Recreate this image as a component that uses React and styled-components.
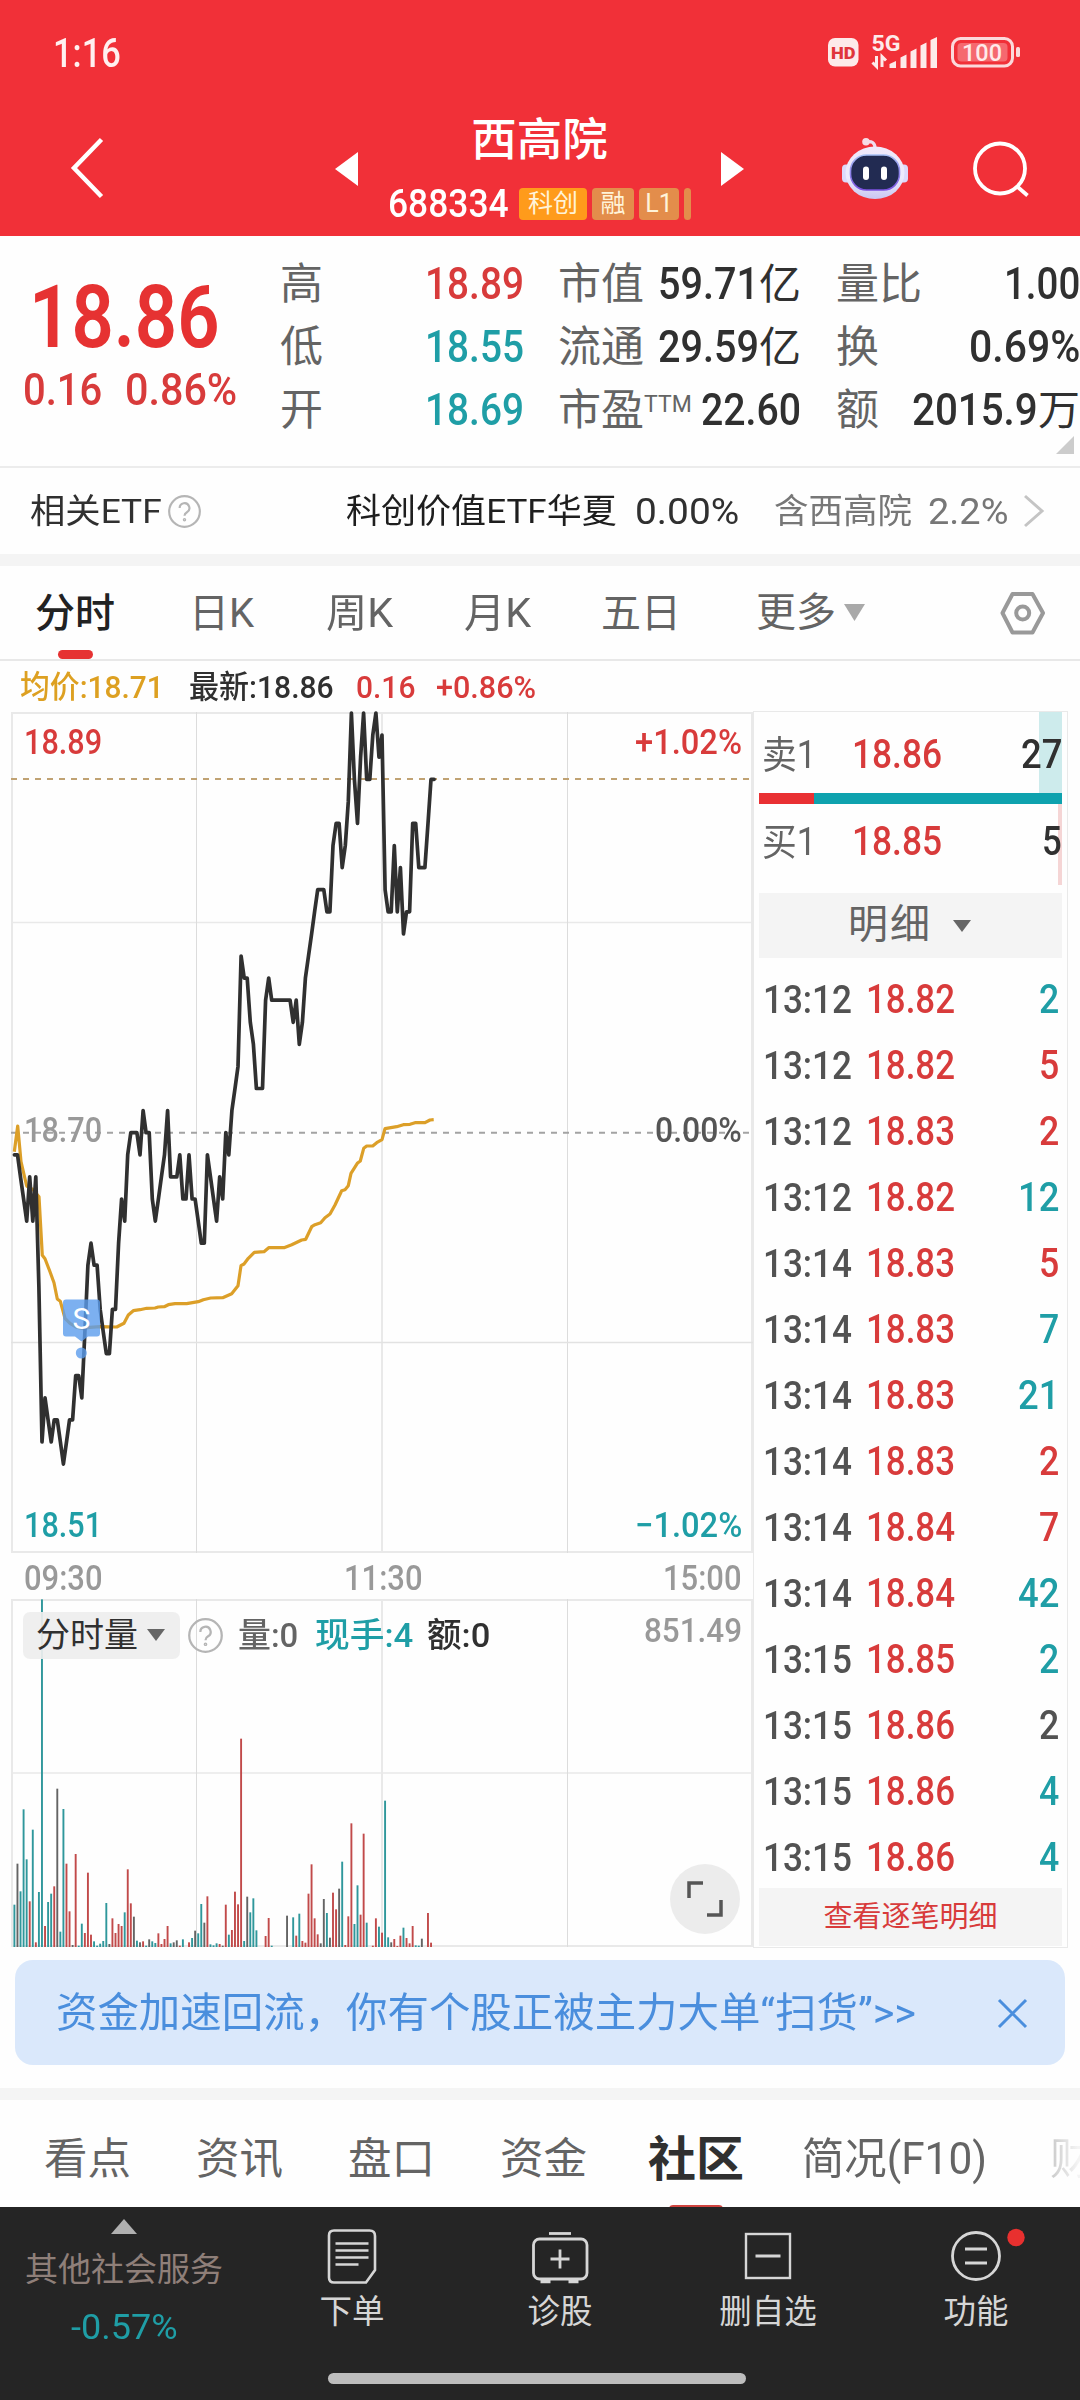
import React, { useLayoutEffect, useRef, useState } from "react";
import styled, { createGlobalStyle } from "styled-components";

const RED = "#d83b3b";
const TEAL = "#1f9ea6";
const INK = "#303030";
const MUTED = "#646464";

const Global = createGlobalStyle`
  * { box-sizing: border-box; }
  body { margin: 0; background: #fefefe; }
  svg { display: block; flex: none; overflow: visible; }
`;

const Page = styled.div`
  width: 1080px;
  height: 2400px;
  overflow: hidden;
  display: flex;
  flex-direction: column;
  font-family: Roboto, "Noto Sans CJK SC", sans-serif;
  color: ${INK};
  background: #fefefe;
`;

/* ---------- text squeezed to a fixed advance ---------- */
const Slot = styled.span`
  display: inline-block;
  flex: none;
  width: ${(p) => p.$w}px;
  white-space: nowrap;
  color: ${(p) => p.$color || "inherit"};
  font-size: ${(p) => (p.$size ? p.$size + "px" : "inherit")};
  font-weight: ${(p) => p.$weight || "inherit"};
  margin-left: ${(p) => p.$ml || 0}px;
`;
const Inner = styled.span`
  display: inline-block;
  transform-origin: 0 50%;
`;
function Fit({ w, children, ...rest }) {
  const ref = useRef(null);
  const [k, setK] = useState(1);
  useLayoutEffect(() => {
    setK(w / ref.current.offsetWidth);
  }, [w, children]);
  const props = {};
  Object.keys(rest).forEach((n) => (props["$" + n] = rest[n]));
  return (
    <Slot $w={w} {...props}>
      <Inner ref={ref} style={{ transform: `scaleX(${k})` }}>{children}</Inner>
    </Slot>
  );
}

/* ---------- status bar ---------- */
const StatusBar = styled.div`
  height: 104px;
  flex: none;
  background: #f13038;
  color: #fff0f0;
  display: flex;
  justify-content: space-between;
  padding: 33px 60px 0 53px;
  line-height: 41px;
`;
const Indicators = styled.div`
  display: flex;
`;

function StatusIcons() {
  return (
    <Indicators>
      <svg width="194" height="40" viewBox="826 33 194 40">
        <rect x="828" y="38" width="30.500" height="28.500" rx="7" fill="#fdeaea" />
        <text x="831" y="58.500" fontSize="17" fontWeight="900" textLength="24.500" lengthAdjust="spacingAndGlyphs" fill="#e0353b">HD</text>
        <text x="871.500" y="51" fontSize="22.500" fontWeight="700" textLength="29" lengthAdjust="spacingAndGlyphs" fill="#fdeaea">5G</text>
        <g fill="none" stroke="#fdeaea" strokeWidth="3">
          <path d="M876.500 56v10.500l-4-4M882 67v-10.500l4 4" />
        </g>
        <g fill="#fdeaea">
          <path d="M889.500 64l6.500-3v7h-6.500zM900.500 57.500l6-3V68h-6zM910.500 51.500l6-3V68h-6zM920.500 45.500l6-3V68h-6zM930.500 40l6.500-3V68h-6.500z" />
        </g>
        <rect x="952.500" y="38.500" width="60" height="27.500" rx="8" fill="none" stroke="#fbd9db" strokeWidth="3" />
        <rect x="957.500" y="43" width="50" height="18.500" rx="4" fill="#f5696f" />
        <text x="962" y="61" fontSize="24" fontWeight="500" textLength="40" lengthAdjust="spacingAndGlyphs" fill="#ffeaea">100</text>
        <rect x="1016" y="47" width="4" height="10" rx="1.500" fill="#fbd9db" />
      </svg>
    </Indicators>
  );
}

/* ---------- header ---------- */
const Header = styled.div`
  height: 132px;
  flex: none;
  background: #f13038;
  color: #fff;
  display: flex;
  align-items: flex-start;
`;
const HeadSide = styled.div`
  width: ${(p) => p.$w}px;
  height: 128px;
  display: flex;
  align-items: center;
  padding-left: ${(p) => p.$pl || 0}px;
`;
const HeadTitle = styled.div`
  width: 306px;
  display: flex;
  flex-direction: column;
  align-items: center;
  padding-right: 1px;
`;
const StockName = styled.div`
  font-size: 45.500px;
  line-height: 56px;
  padding-top: 9px;
  height: 70px;
  font-weight: 500;
`;
const CodeRow = styled.div`
  display: flex;
  align-items: center;
  height: 60px;
  gap: 10px;
`;
const Tag = styled.span`
  height: 32px;
  width: ${(p) => p.$w}px;
  line-height: 31px;
  text-align: center;
  border-radius: 4px;
  background: ${(p) => p.$bg};
  color: #fff3d8;
  font-size: 25px;
`;

/* ---------- quote ---------- */
const Quote = styled.div`
  height: 232px;
  flex: none;
  border-bottom: 2px solid #ececec;
  display: flex;
  position: relative;
`;
const PriceCol = styled.div`
  width: 280px;
  color: ${RED};
`;
const BigPrice = styled.div`
  padding: 36px 0 0 29px;
  height: 122px;
  line-height: 90px;
  font-size: 87px;
  font-weight: 600;
  color: #e63232;
`;
const ChangeRow = styled.div`
  padding: 7px 0 0 23px;
  line-height: 52px;
  font-size: 43.500px;
  font-weight: 500;
`;
const StatCol = styled.div`
  width: ${(p) => p.$w}px;
  margin-right: ${(p) => p.$mr || 0}px;
  padding-top: 17px;
`;
const Stat = styled.div`
  display: flex;
  justify-content: space-between;
  height: 63px;
  line-height: 63px;
  font-size: 43px;
  color: ${MUTED};
`;
const StatValue = styled.span`
  display: flex;
  font-size: 43.500px;
  font-weight: 500;
  color: ${(p) => p.$color || INK};
`;
const Unit = styled.span`
  font-size: 42px;
  font-weight: 400;
`;
const StatLabel = styled.span`
  display: flex;
`;
const Sup = styled.span`
  line-height: 51px;
  font-size: 23px;
`;
const Corner = styled.svg`
  position: absolute;
  right: 6px;
  top: 200px;
`;

/* ---------- ETF ---------- */
const EtfRow = styled.div`
  height: 86px;
  flex: none;
  line-height: 87px;
  padding: 0 36px 0 30px;
  display: flex;
  align-items: center;
  justify-content: space-between;
  font-size: 34px;
`;
const Group = styled.div`
  display: flex;
  align-items: center;
  gap: ${(p) => p.$gap || 0}px;
  color: ${(p) => p.$color || "inherit"};
`;
const Band = styled.div`
  height: 12px;
  flex: none;
  background: #f4f4f4;
`;

/* ---------- period tabs ---------- */
const Periods = styled.div`
  height: 95px;
  flex: none;
  border-bottom: 2px solid #e8e8e8;
  display: flex;
  align-items: stretch;
  padding-left: 35px;
`;
const Period = styled.div`
  width: ${(p) => p.$w}px;
  line-height: 95px;
  font-size: 40px;
  display: flex;
  flex-direction: column;
  color: ${(p) => (p.$on ? "#222" : MUTED)};
  font-weight: ${(p) => (p.$on ? 500 : 400)};
`;
const PeriodMark = styled.i`
  width: 35px;
  height: 9px;
  border-radius: 5px;
  background: #e63232;
  margin: -11px 0 0 23px;
`;
const More = styled.div`
  display: flex;
  align-items: center;
  gap: 8px;
  width: 243px;
  line-height: 95px;
  height: 92px;
  font-size: 40px;
  color: ${MUTED};
`;

/* ---------- main ---------- */
const Main = styled.div`
  height: 1287px;
  flex: none;
  display: flex;
`;
const Left = styled.div`
  width: 753px;
`;
const Legend = styled.div`
  height: 50px;
  line-height: 53px;
  padding-left: 20px;
  display: flex;
  font-size: 31.500px;
`;
const Plot = styled.div`
  position: relative;
  height: ${(p) => p.$h}px;
`;
const Overlay = styled.div`
  position: absolute;
  inset: 0;
  padding: ${(p) => p.$pad};
  display: flex;
  flex-direction: column;
  justify-content: space-between;
`;
const ScaleRow = styled.div`
  display: flex;
  justify-content: space-between;
  line-height: 40px;
  font-size: 34.500px;
  font-weight: 500;
  color: ${(p) => p.$color};
  padding-bottom: ${(p) => p.$lift || 0}px;
`;
const Axis = styled.div`
  height: 45px;
  display: flex;
  justify-content: space-between;
  padding: 4px 11px 0 24px;
  line-height: 40px;
  font-size: 34.500px;
  font-weight: 500;
  color: #999;
`;
const VolHead = styled.div`
  display: flex;
  align-items: center;
  font-size: 34px;
  line-height: 48px;
`;
const Picker = styled.div`
  width: 157px;
  height: 47px;
  border-radius: 7px;
  background: rgba(238, 238, 238, 0.92);
  display: flex;
  align-items: center;
  justify-content: center;
  gap: 9px;
  padding-right: 2px;
  margin-right: 8px;
`;
const MaxVolume = styled.div`
  height: 48px;
  line-height: 38px;
  margin-left: 154px;
`;
const ExpandRow = styled.div`
  display: flex;
  justify-content: flex-end;
`;
const Expand = styled.div`
  width: 70px;
  height: 70px;
  margin-right: 2px;
  border-radius: 35px;
  background: #ececec;
  display: flex;
  align-items: center;
  justify-content: center;
`;

/* ---------- order book ---------- */
const Book = styled.div`
  width: 315px;
  margin-top: 50px;
  height: 1237px;
  border: 1.500px solid #e9e9e9;
  padding: 0 5px 0 5px;
  display: flex;
  flex-direction: column;
`;
const BookRow = styled.div`
  height: 81px;
  display: flex;
  align-items: center;
  padding: ${(p) => p.$pad};
  font-size: 38px;
  line-height: 44px;
  color: ${MUTED};
  background: linear-gradient(${(p) => p.$depth}, ${(p) => p.$depth}) right / ${(p) => p.$dw}px 100% no-repeat;
`;
const Ratio = styled.div`
  height: 11px;
  background: linear-gradient(90deg, #e93033 55px, #0ea2ae 55px);
`;
const Price = styled.span`
  margin-left: ${(p) => p.$ml}px;
  font-size: 40px;
  font-weight: 500;
  color: ${RED};
  flex: 1;
`;
const Qty = styled.span`
  font-size: 40px;
  font-weight: 500;
  color: ${(p) => p.$color};
`;
const DetailHead = styled.div`
  margin-top: 8px;
  height: 65px;
  line-height: 64px;
  background: #f4f4f4;
  display: flex;
  align-items: center;
  justify-content: center;
  gap: 21px;
  font-size: 40px;
  letter-spacing: 2px;
  color: ${MUTED};
  padding-right: 2px;
`;
const DetailText = styled.span`
  height: 65px;
`;
const Trades = styled.div`
  padding: 9px 3px 0 4px;
  height: 930px;
`;
const Trade = styled.div`
  height: 66px;
  line-height: 66px;
  display: flex;
  font-size: 39px;
  font-weight: 500;
  color: #525252;
`;
const DetailLink = styled.div`
  height: 58px;
  line-height: 58px;
  background: #f4f4f4;
  text-align: center;
  color: ${RED};
  font-size: 29px;
`;

/* ---------- banner, tabs, nav ---------- */
const BannerArea = styled.div`
  height: 140px;
  flex: none;
  padding: 12px 15px 0;
`;
const Banner = styled.div`
  height: 105px;
  line-height: 107px;
  border-radius: 18px;
  background: #dae8fb;
  color: #4a8edd;
  font-size: 41px;
  display: flex;
  justify-content: space-between;
  padding: 0 37px 0 41px;
`;
const CloseIcon = styled.svg`
  margin-top: 38px;
`;
const Sections = styled.div`
  height: 107px;
  flex: none;
  display: flex;
  overflow: hidden;
  padding-left: 44px;
`;
const Section = styled.div`
  flex: none;
  width: ${(p) => p.$w}px;
  height: 107px;
  line-height: 119px;
  font-size: ${(p) => (p.$on ? 48 : 43.500)}px;
  font-weight: ${(p) => (p.$on ? 700 : 400)};
  color: ${(p) => (p.$on ? "#303030" : MUTED)};
`;
const FadedSection = styled(Section)`
  color: transparent;
  background: linear-gradient(90deg, #c9c9c9, #f4f4f4 28px);
  background-clip: text;
  overflow: hidden;
`;
const SectionMark = styled.i`
  display: block;
  width: 54px;
  height: 6px;
  border-radius: 4px 4px 0 0;
  background: #d0433f;
  margin: -14px 0 0 21px;
`;
const Nav = styled.div`
  height: 193px;
  flex: none;
  background: #252525;
  display: flex;
  flex-direction: column;
  justify-content: space-between;
  align-items: center;
  padding-bottom: 16px;
`;
const NavRow = styled.div`
  width: 1080px;
  display: flex;
`;
const IndexCell = styled.div`
  width: 248px;
  padding-top: 12px;
  display: flex;
  flex-direction: column;
  align-items: center;
  color: #8f7f79;
  font-size: 33px;
`;
const IndexName = styled.div`
  line-height: 46px;
  margin-top: 13px;
`;
const IndexChange = styled.div`
  line-height: 40px;
  margin-top: 15px;
  padding-left: 1px;
  font-size: 35px;
  color: ${TEAL};
`;
const NavCell = styled.div`
  width: 208px;
  padding-top: 20px;
  display: flex;
  flex-direction: column;
  align-items: center;
  color: #d6d6d6;
  font-size: 32.500px;
  line-height: 44px;
  gap: 5px;
`;
const HomeBar = styled.div`
  width: 418px;
  height: 11px;
  border-radius: 6px;
  background: #bdbdbd;
  margin-right: 6px;
`;

/* ---------- data ---------- */
const LEFT = 14.4;
const STEP = 3.0635;
const TICK = 22.09;
const MID = 1132.7;

const ticks = [
  -1, -1, -2, -3, -4, -2, -4, -2, -7, -14, -12, -13, -14, -13, -13, -14, -15, -14, -13, -13,
  -11, -11, -12, -9, -6, -5, -6, -6, -8, -9, -10, -10, -8, -8, -5, -3, -4, -1, 0, 0,
  0, -1, 1, 0, 0, -3, -4, -3, -2, -1, 1, -2, -2, -2, -1, -3, -3, -1, -3, -3,
  -4, -5, -5, -1, -2, -3, -4, -2, -3, 0, -1, 1, 2, 3, 8, 7, 7, 5, 4, 2,
  2, 2, 6, 7, 6, 6, 6, 6, 6, 6, 6, 5, 6, 4, 5, 7, 8, 9, 10, 11,
  11, 11, 10, 10, 13, 14, 14, 12, 13, 15, 19, 16, 14, 17, 19, 16, 16, 18, 19, 17,
  18, 11, 10, 10, 13, 10, 12, 9, 10, 10, 14, 14, 12, 12, 12, 14, 16, 16,
];

const average = [
  [43, 155], [53, 78], [63, 185], [80, 258], [98, 268], [117, 290], [127, 466], [135, 476], [150, 515], [162, 548],
  [172, 597], [181, 604], [195, 655], [210, 670], [230, 682], [250, 686], [270, 682], [300, 680], [350, 681], [372, 670],
  [385, 645], [400, 632], [420, 629], [440, 625], [465, 624], [475, 621], [493, 620], [505, 614], [525, 611], [560, 611],
  [595, 605], [610, 599], [632, 594], [668, 593], [695, 581], [714, 557], [723, 497], [732, 492], [745, 475], [763, 457],
  [792, 455], [806, 443], [852, 443], [875, 434], [905, 420], [917, 418], [935, 380], [945, 374], [962, 368], [975, 353],
  [990, 342], [1005, 315], [1025, 272], [1035, 269], [1045, 257], [1053, 220], [1072, 190], [1081, 183], [1091, 145],
  [1100, 138], [1118, 138], [1130, 128], [1146, 119], [1155, 86], [1190, 80], [1210, 74], [1230, 73], [1245, 68],
  [1275, 68], [1290, 60], [1301, 59],
];

const volumes = (
  "t127 g250 t167 t413 t263 r137 t352 r14 t165 t1043 r63 t135 t160 r182 g475 t46 t414 r250 r107 g6 " +
  "r279 t4 t70 r42 r223 r37 t17 t4 t10 t18 t132 g9 r86 r42 r69 r63 t104 r233 r131 g91 " +
  "t19 g14 r17 t4 g23 t17 t12 r41 r9 r24 r63 t11 g14 g20 r4 t23 x0 r14 t27 g49 " +
  "t41 t129 g73 r152 t8 t5 t11 r9 g4 r127 t37 r51 r166 r128 r625 t18 g151 t104 t146 t50 " +
  "x0 x0 r33 r87 t4 x0 x0 x0 x0 g94 x0 t89 r34 t100 r18 r13 r160 r248 r86 r38 " +
  "g11 g144 t102 g28 r163 r113 g175 t256 r6 r92 r371 t69 t185 r97 r340 t73 x0 r4 r86 t61 " +
  "r43 t439 t29 g14 r24 r3 r34 t58 r27 r11 r63 t5 t4 g25 x0 r102 r13"
).split(" ");
const volColor = { t: "#2f979b", r: "#c14a4a", g: "#646464", x: "none" };

const trades = [
  ["13:12", "18.82", 2, TEAL], ["13:12", "18.82", 5, RED], ["13:12", "18.83", 2, RED], ["13:12", "18.82", 12, TEAL],
  ["13:14", "18.83", 5, RED], ["13:14", "18.83", 7, TEAL], ["13:14", "18.83", 21, TEAL], ["13:14", "18.83", 2, RED],
  ["13:14", "18.84", 7, RED], ["13:14", "18.84", 42, TEAL], ["13:15", "18.85", 2, TEAL], ["13:15", "18.86", 2, "#525252"],
  ["13:15", "18.86", 4, TEAL], ["13:15", "18.86", 4, TEAL],
];

const x = (i) => LEFT + i * STEP;

function GridLines({ ys, top, bottom }) {
  return (
    <g fill="none" stroke="#e9e9e9">
      {ys.map((y, i) => (
        <path key={y} d={`M11 ${y}H753`} strokeWidth={i === 1 ? 1.5 : 2} />
      ))}
      <path d={`M12 ${top}V${bottom}M382 ${top}V${bottom}M752 ${top}V${bottom}`} strokeWidth="2" />
      <path d={`M196.500 ${top}V${bottom}M567.500 ${top}V${bottom}`} strokeWidth="1" stroke="#dcdcdc" />
    </g>
  );
}

function PriceChart() {
  const line = ticks.map((t, i) => `${x(i).toFixed(1)},${(MID - t * TICK).toFixed(1)}`).join(" ");
  const avg = average.map(([a, b]) => `${(a / 3).toFixed(1)},${(1100 + b / 3).toFixed(1)}`).join(" ");
  return (
    <svg width="753" height="843" viewBox="0 711 753 843">
      <GridLines ys={[713, 922.5, 1552]} top={712} bottom={1553} />
      <path d="M11 1342.500H753" stroke="#e2e2e2" strokeWidth="1.500" />
      <path d="M11 779H750" stroke="#c0a273" strokeWidth="2" strokeDasharray="6 6" />
      <path d="M11 1132.700H750" stroke="#a3a3a3" strokeWidth="2" strokeDasharray="6 6" />
      <polyline points={avg} fill="none" stroke="#dc9f28" strokeWidth="3.200" strokeLinejoin="round" />
      <polyline points={line} fill="none" stroke="#303030" strokeWidth="3.700" strokeLinejoin="round" strokeLinecap="round" />
      <g fill="#5b9cec" fillOpacity="0.8">
        <path d="M66 1299.500h31a3 3 0 0 1 3 3v31a3 3 0 0 1 -3 3h-9l-6.500 5l-6.500 -5h-9a3 3 0 0 1 -3 -3v-31a3 3 0 0 1 3 -3z" />
        <circle cx="81.300" cy="1353" r="5.500" />
      </g>
      <text x="81.300" y="1328.500" textAnchor="middle" fontSize="30" fill="#fff">S</text>
    </svg>
  );
}

function VolumeChart() {
  return (
    <svg width="753" height="349" viewBox="0 1599 753 349">
      <GridLines ys={[1600, 1773, 1946]} top={1599} bottom={1947} />
      {volumes.map((v, i) => {
        const h = Number(v.slice(1)) / 3;
        return <rect key={i} x={(x(i) - 0.95).toFixed(2)} y={1947 - h} width="1.900" height={h} fill={volColor[v[0]]} />;
      })}
    </svg>
  );
}

function Help({ size }) {
  return (
    <svg width={size} height={size} viewBox="0 0 34 34" fill="none" stroke="#b5b5b5" strokeWidth="2.200">
      <circle cx="17" cy="17" r="15.800" />
      <path d="M12 13.500a5 5 0 1 1 7.500 4.300c-1.700 1-2.500 1.800-2.500 3.700" />
      <circle cx="17" cy="25.500" r="0.700" />
    </svg>
  );
}

function Triangle({ w, h, color }) {
  return (
    <svg width={w} height={h} viewBox="0 0 10 10" preserveAspectRatio="none">
      <path d="M0 0H10L5 10z" fill={color} />
    </svg>
  );
}

function Robot() {
  return (
    <svg width="68" height="66" viewBox="841 134 68 66">
      <defs>
        <linearGradient id="shell" x1="0" y1="0" x2="0" y2="1">
          <stop offset="0" stopColor="#f0e8fa" />
          <stop offset="0.600" stopColor="#eceafc" />
          <stop offset="1" stopColor="#c9c6f2" />
        </linearGradient>
        <linearGradient id="rim" x1="0" y1="0" x2="0" y2="1">
          <stop offset="0" stopColor="#a8c0f5" />
          <stop offset="1" stopColor="#7a4fe0" />
        </linearGradient>
      </defs>
      <path d="M875 147c0-5 -3.500-7.500 -8.500-6" fill="none" stroke="#f0dcee" strokeWidth="3.200" />
      <circle cx="866" cy="140.800" r="3.800" fill="#f6dbe6" />
      <rect x="842" y="163.500" width="12" height="18" rx="4" fill="#dcd9fb" />
      <rect x="896" y="163.500" width="12" height="18" rx="4" fill="#dcd9fb" />
      <ellipse cx="875" cy="171.800" rx="29.500" ry="26.300" fill="url(#shell)" />
      <rect x="850.500" y="154" width="49" height="35" rx="16" fill="#222b52" stroke="url(#rim)" strokeWidth="1.600" />
      <rect x="863" y="165.500" width="6" height="13.500" rx="3" fill="#fff" />
      <rect x="881" y="165.500" width="6" height="13.500" rx="3" fill="#fff" />
    </svg>
  );
}

const ordersIcon = (
  <svg width="52" height="58" viewBox="326 2228 52 58" fill="none" stroke="#d6d6d6" strokeWidth="2.600">
    <path d="M334 2231.500h35.500q5.500 0 5.500 5.500v34l-9 12.500h-32q-5 0-5-5v-42q0-5 5-5z" />
    <path d="M335.500 2244.500h33M335.500 2251.500h33M335.500 2258.500h33M335.500 2265.500h23" />
  </svg>
);
const diagnoseIcon = (
  <svg width="58" height="58" viewBox="531 2228 58 58" fill="none" stroke="#d6d6d6" strokeWidth="2.800">
    <path d="M549 2234.500h22" />
    <rect x="533.500" y="2240" width="53.500" height="40" rx="6" />
    <path d="M560 2250.500v19M550.500 2260h19" />
    <path d="M540.500 2282.500h10M568.500 2282.500h10" strokeWidth="3.500" />
  </svg>
);
const removeIcon = (
  <svg width="50" height="58" viewBox="743 2228 50 58" fill="none" stroke="#d6d6d6" strokeWidth="2.400">
    <rect x="746" y="2235" width="44" height="44" />
    <path d="M755.500 2257h25" strokeWidth="3" />
  </svg>
);
const toolsIcon = (
  <svg width="98" height="58" viewBox="927 2228 98 58" fill="none" stroke="#d6d6d6" strokeWidth="2.800">
    <circle cx="976" cy="2257" r="23.500" />
    <path d="M965 2250h22M965 2264h22" />
    <circle cx="1016" cy="2238.500" r="8.700" fill="#e8302f" stroke="none" />
  </svg>
);

export default function App() {
  return (
    <Page>
      <Global />
      <StatusBar>
        <Fit w={68} size={40} weight={500}>1:16</Fit>
        <StatusIcons />
      </StatusBar>

      <Header>
        <HeadSide $w={387} $pl={70}>
          <svg width="36" height="62" viewBox="0 0 36 62" fill="none" stroke="#fff" strokeWidth="4.500">
            <path d="M31.500 2.500L4 31L31.500 59.500" />
          </svg>
          <svg width="252" height="34" viewBox="0 0 252 34">
            <path d="M252 1V35L229 18z" fill="#fff" />
          </svg>
        </HeadSide>
        <HeadTitle>
          <StockName>西高院</StockName>
          <CodeRow>
            <Fit w={121} size={38} weight={500}>688334</Fit>
            <Group $gap={5}>
              <Tag $w={68} $bg="#ff9b1b">科创</Tag>
              <Tag $w={42} $bg="#e38d4b">融</Tag>
              <Tag $w={40} $bg="#e38d4b">L1</Tag>
              <Tag $w={7} $bg="#e38d4b" />
            </Group>
          </CodeRow>
        </HeadTitle>
        <HeadSide $w={387} $pl={28}>
          <svg width="23" height="34" viewBox="0 0 23 34">
            <path d="M0 1V35L23 18z" fill="#fff" />
          </svg>
          <HeadSide $w={160} $pl={97}>
            <Robot />
          </HeadSide>
          <HeadSide $w={120} $pl={66}>
            <svg width="60" height="60" viewBox="970 138 60 60" fill="none" stroke="#fff" strokeWidth="3.800">
              <circle cx="1000" cy="168.500" r="25" />
              <path d="M1016.500 186L1027.500 195.500" />
            </svg>
          </HeadSide>
        </HeadSide>
      </Header>

      <Quote>
        <PriceCol>
          <BigPrice><Fit w={191}>18.86</Fit></BigPrice>
          <ChangeRow>
            <Fit w={79}>0.16</Fit>
            <Fit w={112} ml={23}>0.86%</Fit>
          </ChangeRow>
        </PriceCol>
        <StatCol $w={244} $mr={34}>
          <Stat>高<StatValue $color={RED}><Fit w={99}>18.89</Fit></StatValue></Stat>
          <Stat>低<StatValue $color={TEAL}><Fit w={99}>18.55</Fit></StatValue></Stat>
          <Stat>开<StatValue $color={TEAL}><Fit w={99}>18.69</Fit></StatValue></Stat>
        </StatCol>
        <StatCol $w={243} $mr={35}>
          <Stat>市值<StatValue><Fit w={101}>59.71</Fit><Unit>亿</Unit></StatValue></Stat>
          <Stat>流通<StatValue><Fit w={101}>29.59</Fit><Unit>亿</Unit></StatValue></Stat>
          <Stat>
            <StatLabel>市盈<Sup>TTM</Sup></StatLabel>
            <StatValue><Fit w={100}>22.60</Fit></StatValue>
          </Stat>
        </StatCol>
        <StatCol $w={244}>
          <Stat>量比<StatValue><Fit w={76}>1.00</Fit></StatValue></Stat>
          <Stat>换<StatValue><Fit w={111}>0.69%</Fit></StatValue></Stat>
          <Stat>额<StatValue><Fit w={126}>2015.9</Fit><Unit>万</Unit></StatValue></Stat>
        </StatCol>
        <Corner width="18" height="18" viewBox="0 0 18 18"><path d="M18 0V18H0z" fill="#ccc" /></Corner>
      </Quote>

      <EtfRow>
        <Group $gap={6}>
          <Fit w={132}>相关ETF</Fit>
          <Help size={33} />
        </Group>
        <Group>
          <Fit w={271} color="#1e1e1e">科创价值ETF华夏</Fit>
          <Fit w={104} size={37} ml={18}>0.00%</Fit>
          <Group $color="#777">
            <Fit w={138} ml={35}>含西高院</Fit>
            <Fit w={80} size={37} ml={16}>2.2%</Fit>
          </Group>
          <svg width="36" height="34" viewBox="2 0 36 34" fill="none" stroke="#c4c4c4" strokeWidth="3">
            <path d="M19 2L36 17L19 32" />
          </svg>
        </Group>
      </EtfRow>
      <Band />

      <Periods>
        <Period $w={154} $on>分时<PeriodMark /></Period>
        <Period $w={137}><Fit w={65}>日K</Fit></Period>
        <Period $w={138}><Fit w={67}>周K</Fit></Period>
        <Period $w={137}><Fit w={67}>月K</Fit></Period>
        <Period $w={155}>五日</Period>
        <More>更多<Triangle w={21} h={17} color="#a9a9a9" /></More>
        <svg width="48" height="91" viewBox="0 -1 48 91" fill="none" stroke="#999" strokeWidth="3.500">
          <path d="M13.500 27H33.500L44 46L33.500 65.500H13.500L3.500 46z" strokeLinejoin="round" strokeWidth="4" />
          <circle cx="23.700" cy="46" r="6.500" strokeWidth="4" />
        </svg>
      </Periods>

      <Main>
        <Left>
          <Legend>
            <Fit w={144} color="#dda021" weight={500}>均价:18.71</Fit>
            <Fit w={145} ml={25} weight={500}>最新:18.86</Fit>
            <Fit w={59} ml={22} color={RED} weight={500}>0.16</Fit>
            <Fit w={100} ml={21} color={RED} weight={500}>+0.86%</Fit>
          </Legend>
          <Plot $h={843}>
            <PriceChart />
            <Overlay $pad="11px 11px 9px 24px">
              <ScaleRow $color={RED}><Fit w={78}>18.89</Fit><Fit w={107}>+1.02%</Fit></ScaleRow>
              <ScaleRow $color="#555" $lift={8}><Fit w={78} color="#999">18.70</Fit><Fit w={87}>0.00%</Fit></ScaleRow>
              <ScaleRow $color={TEAL}><Fit w={78}>18.51</Fit><Fit w={107}>−1.02%</Fit></ScaleRow>
            </Overlay>
          </Plot>
          <Axis>
            <Fit w={79}>09:30</Fit>
            <Fit w={79}>11:30</Fit>
            <Fit w={79}>15:00</Fit>
          </Axis>
          <Plot $h={349}>
            <VolumeChart />
            <Overlay $pad="12px 11px 14px 23px">
              <VolHead>
                <Picker>分时量<Triangle w={18} h={12} color="#666" /></Picker>
                <Help size={35} />
                <Fit w={60} ml={15} weight={500} color={MUTED}>量:0</Fit>
                <Fit w={98} ml={17} weight={500} color={TEAL}>现手:4</Fit>
                <Fit w={63} ml={14} weight={500}>额:0</Fit>
                <MaxVolume><Fit w={98} weight={500} color="#999">851.49</Fit></MaxVolume>
              </VolHead>
              <ExpandRow>
                <Expand>
                  <svg width="36" height="36" viewBox="0 0 36 36" fill="none" stroke="#555" strokeWidth="3.500">
                    <path d="M2 17V2H16M34 19V34H20" />
                  </svg>
                </Expand>
              </ExpandRow>
            </Overlay>
          </Plot>
        </Left>

        <Book>
          <BookRow $pad="5px 0 0 3px" $depth="#cdebec" $dw={23}>
            <Fit w={54}>卖1</Fit>
            <Price $ml={36}><Fit w={90}>18.86</Fit></Price>
            <Qty $color={INK}><Fit w={41}>27</Fit></Qty>
          </BookRow>
          <Ratio />
          <BookRow $pad="0 0 5px 3px" $depth="#f5d5d5" $dw={4}>
            <Fit w={54}>买1</Fit>
            <Price $ml={36}><Fit w={90}>18.85</Fit></Price>
            <Qty $color={INK}><Fit w={20}>5</Fit></Qty>
          </BookRow>
          <DetailHead><DetailText>明细</DetailText><Triangle w={18} h={12} color="#666" /></DetailHead>
          <Trades>
            {trades.map(([time, price, qty, color], i) => (
              <Trade key={i}>
                <Fit w={89}>{time}</Fit>
                <Price $ml={14}><Fit w={89}>{price}</Fit></Price>
                <Qty $color={color}><Fit w={qty > 9 ? 41 : 20.5}>{qty}</Fit></Qty>
              </Trade>
            ))}
          </Trades>
          <DetailLink>查看逐笔明细</DetailLink>
        </Book>
      </Main>

      <BannerArea>
        <Banner>
          <Fit w={860}>资金加速回流，你有个股正被主力大单“扫货”&gt;&gt;</Fit>
          <CloseIcon width="31" height="31" viewBox="0 0 31 31" fill="none" stroke="#4a8edd" strokeWidth="3">
            <path d="M2 2L29 29M29 2L2 29" />
          </CloseIcon>
        </Banner>
      </BannerArea>
      <Band />

      <Sections>
        <Section $w={152}>看点</Section>
        <Section $w={152}>资讯</Section>
        <Section $w={152}>盘口</Section>
        <Section $w={148}>资金</Section>
        <Section $w={154} $on>社区<SectionMark /></Section>
        <Section $w={248}><Fit w={185}>简况(F10)</Fit></Section>
        <FadedSection $w={30}>财</FadedSection>
      </Sections>

      <Nav>
        <NavRow>
          <IndexCell>
            <svg width="26" height="15" viewBox="0 0 26 15"><path d="M13 0L26 15H0z" fill="#b0b0b0" /></svg>
            <IndexName>其他社会服务</IndexName>
            <IndexChange><Fit w={107}>-0.57%</Fit></IndexChange>
          </IndexCell>
          <NavCell>{ordersIcon}下单</NavCell>
          <NavCell>{diagnoseIcon}诊股</NavCell>
          <NavCell>{removeIcon}删自选</NavCell>
          <NavCell>{toolsIcon}功能</NavCell>
        </NavRow>
        <HomeBar />
      </Nav>
    </Page>
  );
}
